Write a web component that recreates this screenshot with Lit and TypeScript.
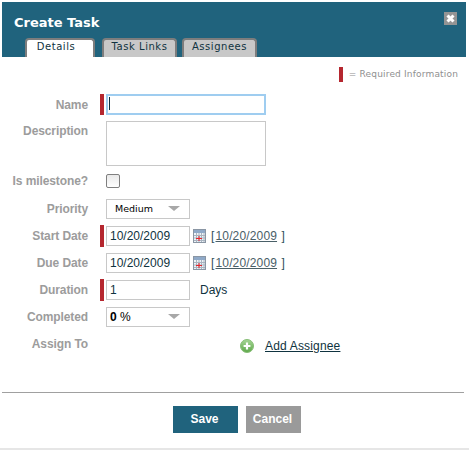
import { LitElement, html, css } from "lit";
import { customElement } from "lit/decorators.js";

@customElement("app-root")
export class AppRoot extends LitElement {
  static styles = css`
    :host { display: block; width: 469px; height: 450px; background: #fff; font-family: "Liberation Sans", Arial, sans-serif; color: #0f3340; overflow: hidden; box-sizing: border-box; border-bottom: 2px solid #e6e6e6; }
    .dialog { margin-left: 2px; width: 464px; padding-top: 2px; display: flex; flex-direction: column; }
    .head { height: 55px; background: #20637d; position: relative; display: flex; flex-direction: column; flex: none; box-sizing: border-box; padding: 12px 0 0 12px; }
    .title { font: bold 13px/18px "DejaVu Sans", Verdana, sans-serif; color: #fff; height: 23px; }
    .tabs { display: flex; gap: 5px; margin-left: 11px; height: 19px; margin-top: auto; }
    .tab { box-sizing: border-box; width: 75px; height: 19px; background: #c8c8c8; border: 2px solid #7d7d7d; border-bottom: 0; border-radius: 4px 4px 0 0; font: 10px/14px "DejaVu Sans", Verdana, sans-serif; color: #0f3340; letter-spacing: .55px; text-align: center; white-space: nowrap; }
    .tab.on { background: #fff; width: 70px; margin-right: 2px; padding-right: 8px; }
    .close { position: absolute; right: 9px; top: 10px; width: 13px; height: 13px; background: #949494; display: flex; }
    .legend { display: flex; justify-content: flex-end; align-items: center; gap: 6px; height: 15px; margin: 10px 8px 0 0; font: 9px/15px "DejaVu Sans", Verdana, sans-serif; color: #8f8f8f; letter-spacing: .17px; }
    .bar { width: 4px; height: 15px; background: #b5272f; display: block; flex: none; }
    .form { display: flex; flex-direction: column; margin-top: 12px; }
    .row { display: grid; grid-template-columns: 86px 16px 2px auto; align-items: center; }
    .row.top { align-items: start; }
    .m6 { margin-top: 6px; }
    .m7 { margin-top: 7px; }
    .m9 { margin-top: 9px; }
    .m10 { margin-top: 10px; }
    .label { font: bold 12px/16px "Liberation Sans", Arial, sans-serif; color: #9c9c9c; text-align: right; letter-spacing: -.1px; white-space: nowrap; }
    .label.pad { padding-top: 2px; }
    .req { width: 4px; height: 22px; margin: -1px 0; justify-self: end; background: #b5272f; display: block; }
    .req.tall { height: 21px; margin: 0; }
    .field { grid-column: 4; display: flex; align-items: center; }
    .box { box-sizing: border-box; border: 1px solid #c8c8c8; background: #fff; height: 20px; width: 84px; font: 12px/18px "Liberation Sans", Arial, sans-serif; color: #0f3340; padding-left: 3px; }
    .name { box-sizing: border-box; width: 160px; height: 21px; border: 2px solid #9fcdf0; padding: 1px 0 0 1px; }
    .caret { width: 1px; height: 13px; background: #0f3340; display: block; }
    .desc { width: 160px; height: 45px; box-sizing: border-box; border: 1px solid #c8c8c8; }
    .check { box-sizing: border-box; width: 14px; height: 14px; border: 1px solid #7f7f7f; border-radius: 2px; background: linear-gradient(#e9e9e9, #fff); }
    .select { display: flex; align-items: center; justify-content: space-between; padding: 0 9px 0 8px; color: #000; }
    .select.med { font: 9.5px/18px "DejaVu Sans", Verdana, sans-serif; }
    .select.pct { padding-left: 3px; }
    .arrow { width: 12px; height: 6px; }
    .cal { width: 13px; height: 14px; margin: 0 5px 0 3px; flex: none; }
    .date { font: 12px/16px "Liberation Sans", Arial, sans-serif; color: #30505c; letter-spacing: .15px; white-space: pre; }
    .date a { color: #4a6068; text-decoration: underline; margin: 0 1px; }
    .days { font: 12px/16px "Liberation Sans", Arial, sans-serif; margin-left: 10px; }
    .assign { margin-left: 134px; display: flex; gap: 11px; margin-top: 3px; }
    .plus { width: 14px; height: 14px; flex: none; }
    .assign a { font: 12px/14px "Liberation Sans", Arial, sans-serif; letter-spacing: .17px; color: #0f3340; text-decoration: underline; align-self: flex-start; }
    .foot { border-top: 1px solid #a0a0a0; margin: 39px 2px 0 0; padding: 13px 0 0 171px; display: flex; gap: 8px; }
    .btn { box-sizing: border-box; height: 27px; font: bold 12px/27px "Liberation Sans", Arial, sans-serif; color: #fff; text-align: center; padding-right: 2px; }
    .save { width: 65px; background: #20637d; }
    .cancel { width: 55px; background: #9a9a9a; }
  `;

  private cal() {
    return html`<svg class="cal" viewBox="0 0 13 14">
      <rect x=".5" y=".5" width="12" height="13" fill="#eef3f8" stroke="#8a96a4"/>
      <rect x="1" y="1" width="11" height="3" fill="#8fa9c8"/>
      <path d="M1 6.5h11M1 9h11M1 11.5h11M3.5 4v9M6 4v9M8.5 4v9M11 4v9" stroke="#a9b4c0" fill="none"/>
      <path d="M3 9.5h6M6 7v5" stroke="#e8222a" fill="none"/>
    </svg>`;
  }

  private arrow() {
    return html`<svg class="arrow" viewBox="0 0 12 6"><path d="M0 0h12L6 5z" fill="#a8a8a8"/></svg>`;
  }

  render() {
    return html`<div class="dialog">
      <div class="head">
        <div class="title">Create Task</div>
        <div class="tabs">
          <div class="tab on">Details</div>
          <div class="tab">Task Links</div>
          <div class="tab">Assignees</div>
        </div>
        <div class="close"><svg width="13" height="13" viewBox="0 0 13 13"><path d="M3.5 3.5l6 6M9.5 3.5l-6 6" stroke="#fff" stroke-width="3"/></svg></div>
      </div>
      <div class="legend"><i class="bar"></i>= Required Information</div>
      <div class="form">
        <div class="row"><span class="label">Name</span><i class="req tall"></i><div class="field"><div class="name"><i class="caret"></i></div></div></div>
        <div class="row top m6"><span class="label pad">Description</span><div class="field"><div class="desc"></div></div></div>
        <div class="row m7"><span class="label">Is milestone?</span><div class="field"><div class="check"></div></div></div>
        <div class="row m10"><span class="label">Priority</span><div class="field"><div class="box select med">Medium ${this.arrow()}</div></div></div>
        <div class="row m7"><span class="label">Start Date</span><i class="req"></i><div class="field"><div class="box">10/20/2009</div>${this.cal()}<span class="date">[<a>10/20/2009</a> ]</span></div></div>
        <div class="row m7"><span class="label">Due Date</span><div class="field"><div class="box">10/20/2009</div>${this.cal()}<span class="date">[<a>10/20/2009</a> ]</span></div></div>
        <div class="row m7"><span class="label">Duration</span><i class="req"></i><div class="field"><div class="box">1</div><span class="days">Days</span></div></div>
        <div class="row m7"><span class="label">Completed</span><div class="field"><div class="box select pct"><span><b>0</b> %</span>${this.arrow()}</div></div></div>
        <div class="row top m9"><span class="label">Assign To</span><div class="field"><div class="assign">
          <svg class="plus" viewBox="0 0 14 14"><defs><linearGradient id="g" x1="0" y1="0" x2="0" y2="1"><stop offset="0" stop-color="#a6d696"/><stop offset="1" stop-color="#5ea84a"/></linearGradient></defs><circle cx="7" cy="7" r="6.5" fill="url(#g)" stroke="#86bd75"/><path d="M7 3.6v6.8M3.6 7h6.8" stroke="#fff" stroke-width="2.2"/></svg>
          <a>Add Assignee</a>
        </div></div></div>
      </div>
      <div class="foot"><div class="btn save">Save</div><div class="btn cancel">Cancel</div></div>
    </div>`;
  }
}
